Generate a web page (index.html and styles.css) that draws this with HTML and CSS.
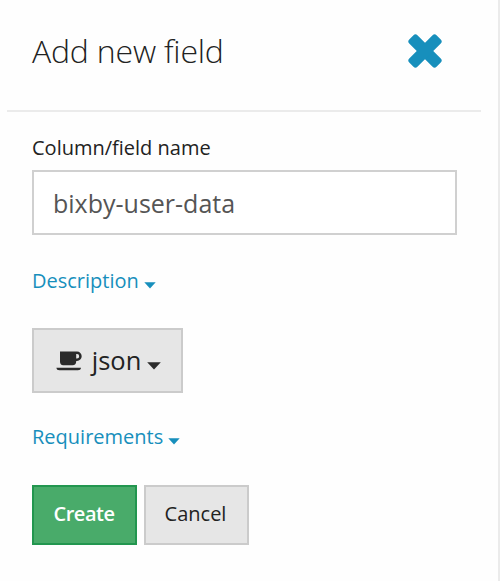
FILE: index.html
```html
<!DOCTYPE html>
<html lang="en">
<head>
<meta charset="utf-8">
<title>Add new field</title>
<link rel="stylesheet" href="styles.css">
</head>
<body>
<main class="panel">
  <header class="header">
    <h1 class="title">Add new field</h1>
    <button class="close" type="button" aria-label="Close">
      <svg width="34" height="34" viewBox="0 0 34 34"><g transform="rotate(45 17 17)"><rect x="-2.3" y="11.2" width="38.6" height="11.6" rx="2.8"/><rect x="11.2" y="-2.3" width="11.6" height="38.6" rx="2.8"/></g></svg>
    </button>
  </header>
  <form class="form">
    <label class="label" for="name"><span>Column/field name</span></label>
    <input class="input" id="name" type="text" value="bixby-user-data">
    <a class="link description"><span>Description</span><svg class="caret" width="12" height="7" viewBox="0 0 12 7"><path d="M.3.3H11.7L6 6.5Z"/></svg></a>
    <button class="button type" type="button">
      <svg class="cup" width="26" height="20" viewBox="0 0 26 20"><path d="M4 .5H21a4.7 4.7 0 0 1 0 9.4H20.2V10.5Q20.2 14.2 16.5 14.2H7.2Q4 14.2 4 10.5ZM20.2 3V7.4H21a2.2 2.2 0 0 0 0-4.4Z" fill-rule="evenodd"/><path d="M.4 16.8H25Q24.8 19.3 21.8 19.3H3.5Q.6 19.3.4 16.8Z"/></svg>
      <span>json</span>
      <svg class="caret" width="14" height="8" viewBox="0 0 14 8"><path d="M.2.3H13.8L7 7.5Z"/></svg>
    </button>
    <a class="link requirements"><span>Requirements</span><svg class="caret" width="12" height="7" viewBox="0 0 12 7"><path d="M.3.3H11.7L6 6.5Z"/></svg></a>
    <div class="actions">
      <button class="button create" type="button">Create</button>
      <button class="button cancel" type="button">Cancel</button>
    </div>
  </form>
</main>
</body>
</html>
```
FILE: styles.css
```css
* { box-sizing: border-box; }
body {
  margin: 0;
  background: #fefefe;
  color: #222;
  font-family: "Open Sans", sans-serif;
  font-size: 20px;
}
.panel {
  height: 581px;
  padding: 0 17px 0 7px;
  border-right: 2px solid #ebebeb;
}
.header {
  display: flex;
  justify-content: space-between;
  height: 112px;
  padding: 29px 39px 0 25px;
  border-bottom: 2px solid #ebebeb;
}
.title {
  margin: 0;
  font-size: 32px;
  font-weight: 300;
  letter-spacing: -0.2px;
  line-height: 44px;
}
.close {
  width: 34px;
  height: 34px;
  margin-top: 5px;
  padding: 0;
  border: 0;
  background: none;
}
.close svg { display: block; fill: #178fbc; }
.form { padding: 21px 24px 0 25px; }
.label { display: block; height: 37px; line-height: 29px; }
.input {
  display: block;
  width: 425px;
  height: 65px;
  padding: 0 20px 0 19px;
  border: 2px solid #d0d0d0;
  border-radius: 0;
  background: #fff;
  color: #555;
  font: 25px "Open Sans", sans-serif;
}
.link { display: flex; align-items: center; gap: 5px; height: 28px; color: #178fbc; line-height: 28px; }
.link .caret { margin-top: 9px; fill: #178fbc; }
.description { margin-top: 32px; }
.button {
  display: flex;
  align-items: center;
  justify-content: center;
  padding: 0 0 3px;
  border: 2px solid #cbcbcb;
  background: #e6e6e6;
  color: #222;
  font: 20px "Open Sans", sans-serif;
}
.type { width: 151px; height: 65px; margin-top: 33px; padding: 0 0 2px 2px; font-size: 25.5px; }
.type svg { flex: none; fill: #2b2b2b; }
.type .cup { margin-top: 3px; }
.type span { margin: 0 6px 0 10px; }
.type .caret { margin-top: 12px; }
.requirements { margin-top: 30px; }
.actions { display: flex; gap: 7px; margin-top: 34px; }
.actions .button { width: 105px; height: 60px; }
.actions .cancel { padding-right: 2px; }
.actions .create { padding-right: 1px; border-color: #22964f; background: #49ab6a; color: #fff; font-weight: 600; letter-spacing: -0.5px; }
```
